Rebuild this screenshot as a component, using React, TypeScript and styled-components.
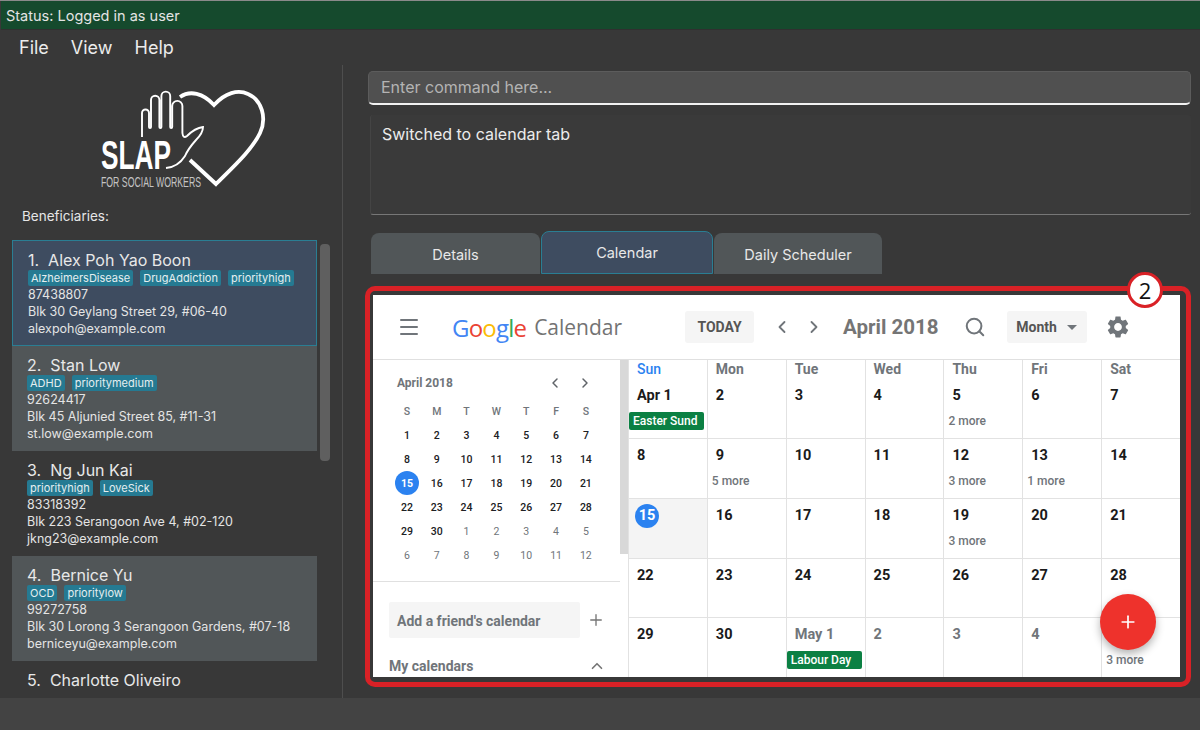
import React from 'react'
import styled, { createGlobalStyle } from 'styled-components'
import { ChevronLeft, ChevronRight, ChevronUp, Menu, Plus, Search } from 'lucide-react'

const GlobalStyle = createGlobalStyle`
  html, body {
    margin: 0;
    padding: 0;
    background: #383838;
  }
  * {
    box-sizing: border-box;
  }
`

const AppWindow = styled.div`
  width: 1200px;
  height: 730px;
  overflow: hidden;
  position: relative;
  display: flex;
  flex-direction: column;
  background: #383838;
  color: #e6e6e6;
  font-family: Inter, 'Liberation Sans', sans-serif;
  border-top: 1px solid #8a8a8a;
`
const StatusBar = styled.div`
  height: 29px;
  flex: none;
  margin-left: 1px;
  padding-left: 5px;
  background: #154a2d;
  font-size: 14.5px;
  line-height: 29px;
  color: #e4e4e4;
  border-bottom: 1px solid #303030;
`
const MenuBar = styled.div`
  height: 35px;
  flex: none;
  display: flex;
  gap: 22px;
  padding-left: 19px;
  font-size: 18px;
  line-height: 36px;
  color: #ececec;
`
const Main = styled.div`
  flex: 1;
  min-height: 0;
  display: flex;
`
const Footer = styled.div`
  height: 32px;
  flex: none;
  background: #434343;
`

const LeftPane = styled.div`
  width: 343px;
  flex: none;
  border-right: 1px solid #4e4e4e;
  display: flex;
  flex-direction: column;
`
const LogoBox = styled.svg`
  display: block;
  margin: 20px 0 0 95px;
  flex: none;
`
const ListLabel = styled.div`
  margin: 11px 0 0 22px;
  font-size: 13.5px;
  line-height: 20px;
  color: #e6e6e6;
`
const ListRow = styled.div`
  display: flex;
  margin: 14px 0 0 12px;
  height: 448px;
`
const CardList = styled.div`
  width: 305px;
  flex: none;
  overflow: hidden;
`
const PersonCard = styled.div<{ $variant: 'selected' | 'light' | 'dark' }>`
  height: ${({ $variant }) => ($variant === 'selected' ? '106px' : '105px')};
  padding: 8px 0 0 15px;
  background: ${({ $variant }) =>
    $variant === 'selected' ? '#3e4c60' : $variant === 'light' ? '#515658' : '#383838'};
  border: ${({ $variant }) => ($variant === 'selected' ? '1px solid #2a7e93' : 'none')};
`
const PersonName = styled.div`
  font-size: 16px;
  line-height: 22px;
  color: #e8e8e8;
  white-space: pre;
`
const TagRow = styled.div`
  display: flex;
  gap: 7px;
  margin-top: -1px;
  height: 16px;
`
const Tag = styled.span`
  padding: 0 3px;
  background: #257a92;
  border-radius: 2px;
  font-size: 11px;
  line-height: 16px;
  color: #e4eef0;
`
const PersonLine = styled.div`
  font-size: 12.5px;
  line-height: 17px;
  color: #e4e4e4;
  white-space: nowrap;
`
const ScrollThumb = styled.div`
  width: 10px;
  height: 217px;
  margin: 4px 0 0 3px;
  border-radius: 4px;
  background: #5f5f5f;
`

const RightPane = styled.div`
  flex: 1;
  min-width: 0;
  display: flex;
  flex-direction: column;
  padding: 6px 9px 0 22px;
`
const CommandBox = styled.div`
  height: 34px;
  margin-left: 3px;
  padding-left: 12px;
  background: #505050;
  border: 1px solid #5c5c5c;
  border-bottom: 2px solid #f2f2f2;
  border-radius: 5px;
  font-size: 16px;
  line-height: 31px;
  color: #b4b4b4;
`
const ResultBox = styled.div`
  height: 100px;
  margin: 10px 0 0 5px;
  padding: 6px 11px;
  background: #3a3a3a;
  border-bottom: 1px solid #777;
  border-left: 1px solid #444;
  border-radius: 3px;
  font-size: 16px;
  line-height: 26px;
  color: #ececec;
`
const TabRow = styled.div`
  display: flex;
  gap: 1px;
  height: 41px;
  margin: 18px 0 0 6px;
  align-items: flex-end;
`
const TabItem = styled.div<{ $active?: boolean; $width: number }>`
  width: ${({ $width }) => $width}px;
  height: ${({ $active }) => ($active ? '43px' : '41px')};
  border-radius: 8px 8px 0 0;
  text-align: center;
  font-size: 14.5px;
  line-height: ${({ $active }) => ($active ? '42px' : '43px')};
  color: #e8e8e8;
  background: ${({ $active }) => ($active ? '#3e4c60' : '#515658')};
  border: ${({ $active }) => ($active ? '1px solid #2a7e93' : 'none')};
`

const CalendarFrame = styled.div`
  position: relative;
  width: 826px;
  height: 401px;
  margin-top: 12px;
  padding: 4px 6px 5px 3px;
  border: 5px solid #d92126;
  border-radius: 10px;
  background: #383838;
`
const FrameBadge = styled.div`
  position: absolute;
  top: -19px;
  right: 23px;
  width: 36px;
  height: 36px;
  border: 3px solid #d92126;
  border-radius: 50%;
  background: #fff;
  color: #111;
  text-align: center;
  font-family: 'Open Sans', sans-serif;
  font-size: 22px;
  line-height: 30px;
`
const CalendarShot = styled.div`
  position: relative;
  width: 100%;
  height: 100%;
  overflow: hidden;
  background: #fff;
  display: flex;
  flex-direction: column;
  font-family: Roboto, 'Liberation Sans', sans-serif;
  color: #70757a;
`
const CalHeader = styled.div`
  height: 65px;
  flex: none;
  display: flex;
  align-items: center;
  border-bottom: 1px solid #e0e0e0;
`
const HeaderIcon = styled.span<{ $left: number }>`
  display: flex;
  margin-left: ${({ $left }) => $left}px;
  color: #70757a;
`
const GoogleWord = styled.span`
  margin-left: 31px;
  font-family: 'Open Sans', sans-serif;
  font-size: 24px;
  letter-spacing: -0.8px;
`
const GoogleLetter = styled.span<{ $color: string }>`
  color: ${({ $color }) => $color};
`
const CalendarWord = styled.span`
  margin-left: 8px;
  font-family: 'Open Sans', sans-serif;
  font-size: 21px;
  color: #737373;
`
const GreyButton = styled.div<{ $width: number; $left: number }>`
  width: ${({ $width }) => $width}px;
  height: 32px;
  margin-left: ${({ $left }) => $left}px;
  display: flex;
  align-items: center;
  justify-content: center;
  gap: 10px;
  background: #f5f5f5;
  border-radius: 3px;
  font-size: 14px;
  font-weight: 700;
  color: #555;
`
const Caret = styled.span`
  width: 0;
  height: 0;
  border-left: 5px solid transparent;
  border-right: 5px solid transparent;
  border-top: 5px solid #70757a;
`
const MonthTitle = styled.span`
  margin-left: 19px;
  font-size: 20.5px;
  font-weight: 700;
  color: #757575;
  white-space: nowrap;
`
const CalBody = styled.div`
  flex: 1;
  min-height: 0;
  display: flex;
`
const SidePanel = styled.div`
  width: 247px;
  flex: none;
  overflow: hidden;
`
const SideScroll = styled.div`
  width: 8px;
  flex: none;
  background: linear-gradient(#d8d8d8 0 194px, #fff 194px);
`
const MiniSection = styled.div`
  height: 222px;
  padding: 14px 0 0 19px;
  border-bottom: 1px solid #e0e0e0;
`
const MiniTitleRow = styled.div`
  display: flex;
  align-items: center;
  height: 18px;
  padding-left: 5px;
  font-size: 12px;
  font-weight: 700;
  color: #70757a;
`
const MiniTitle = styled.span`
  width: 150px;
`
const MiniArrows = styled.span`
  display: flex;
  gap: 14px;
  color: #5f6368;
`
const MiniGrid = styled.div`
  display: grid;
  grid-template-columns: repeat(7, 29.83px);
  grid-auto-rows: 24px;
  margin-top: 7px;
`
const MiniCell = styled.span<{ $tone: 'head' | 'day' | 'out' }>`
  display: flex;
  align-items: center;
  justify-content: center;
  font-size: 10.5px;
  font-weight: ${({ $tone }) => ($tone === 'out' ? 400 : 500)};
  color: ${({ $tone }) => ($tone === 'day' ? '#202124' : '#70757a')};
`
const MiniToday = styled.span`
  width: 24px;
  height: 24px;
  border-radius: 50%;
  background: #2b82f0;
  color: #fff;
  font-weight: 700;
  display: flex;
  align-items: center;
  justify-content: center;
`
const FriendRow = styled.div`
  display: flex;
  align-items: center;
  margin: 20px 0 0 16px;
  height: 36px;
`
const FriendInput = styled.div`
  width: 191px;
  height: 36px;
  padding-left: 8px;
  background: #f5f5f5;
  border-radius: 2px;
  font-size: 14px;
  font-weight: 700;
  line-height: 38px;
  color: #70757a;
`
const MineRow = styled.div`
  display: flex;
  align-items: center;
  margin: 19px 0 0 16px;
  height: 18px;
  font-size: 14px;
  font-weight: 700;
  color: #70757a;
`
const MineLabel = styled.span`
  width: 199px;
`
const SideIcon = styled.span<{ $left?: number }>`
  display: flex;
  margin-left: ${({ $left }) => $left ?? 0}px;
  color: #757575;
`
const MonthGrid = styled.div`
  flex: 1;
  display: grid;
  grid-template-columns: repeat(7, 1fr);
  grid-template-rows: 79px repeat(4, 59.75px);
`
const DayCell = styled.div<{ $today?: boolean }>`
  min-width: 0;
  padding-left: 8px;
  border-left: 1px solid #e2e2e2;
  border-bottom: 1px solid #e2e2e2;
  background: ${({ $today }) => ($today ? '#f4f4f4' : '#fff')};
`
const DayHead = styled.div<{ $blue?: boolean }>`
  height: 18px;
  font-size: 14px;
  font-weight: ${({ $blue }) => ($blue ? 500 : 700)};
  line-height: 18px;
  color: ${({ $blue }) => ($blue ? '#2b82f0' : '#70757a')};
`
const DayNumber = styled.div<{ $out?: boolean; $first?: boolean }>`
  height: 20px;
  margin-top: ${({ $first }) => ($first ? '8px' : '7px')};
  font-size: 14.5px;
  font-weight: 700;
  line-height: 20px;
  color: ${({ $out }) => ($out ? '#70757a' : '#1a1a1a')};
`
const TodayBubble = styled.div`
  width: 24px;
  height: 24px;
  margin: 5px 0 -2px -2px;
  border-radius: 50%;
  background: #2b82f0;
  color: #fff;
  font-size: 14.5px;
  font-weight: 700;
  line-height: 24px;
  text-align: center;
`
const EventChip = styled.div`
  height: 18px;
  margin: 6px 3px 0 -8px;
  padding-left: 4px;
  overflow: hidden;
  white-space: nowrap;
  background: #0b8043;
  border-radius: 2px;
  font-size: 12px;
  font-weight: 500;
  line-height: 18px;
  color: #fff;
`
const MoreLabel = styled.div`
  height: 16px;
  margin: 7px 0 0 -4px;
  font-size: 12px;
  font-weight: 500;
  line-height: 16px;
  color: #70757a;
`
const AddButton = styled.div`
  position: absolute;
  left: 727px;
  top: 299px;
  width: 56px;
  height: 56px;
  display: flex;
  align-items: center;
  justify-content: center;
  border-radius: 50%;
  background: #ee322c;
  color: #fff;
  box-shadow: 0 4px 8px rgba(0, 0, 0, 0.3);
`

const people = [
  { name: '1.  Alex Poh Yao Boon', tags: ['AlzheimersDisease', 'DrugAddiction', 'priorityhigh'], phone: '87438807', address: 'Blk 30 Geylang Street 29, #06-40', email: 'alexpoh@example.com' },
  { name: '2.  Stan Low', tags: ['ADHD', 'prioritymedium'], phone: '92624417', address: 'Blk 45 Aljunied Street 85, #11-31', email: 'st.low@example.com' },
  { name: '3.  Ng Jun Kai', tags: ['priorityhigh', 'LoveSick'], phone: '83318392', address: 'Blk 223 Serangoon Ave 4, #02-120', email: 'jkng23@example.com' },
  { name: '4.  Bernice Yu', tags: ['OCD', 'prioritylow'], phone: '99272758', address: 'Blk 30 Lorong 3 Serangoon Gardens, #07-18', email: 'berniceyu@example.com' },
  { name: '5.  Charlotte Oliveiro', tags: [], phone: '', address: '', email: '' },
]

const miniWeeks = [
  [1, 2, 3, 4, 5, 6, 7],
  [8, 9, 10, 11, 12, 13, 14],
  [15, 16, 17, 18, 19, 20, 21],
  [22, 23, 24, 25, 26, 27, 28],
  [29, 30, 1, 2, 3, 4, 5],
  [6, 7, 8, 9, 10, 11, 12],
]

interface DayInfo {
  label: string
  head?: string
  out?: boolean
  today?: boolean
  chip?: string
  more?: string
}

const monthDays: DayInfo[] = [
  { label: 'Apr 1', head: 'Sun', chip: 'Easter Sund' },
  { label: '2', head: 'Mon' },
  { label: '3', head: 'Tue' },
  { label: '4', head: 'Wed' },
  { label: '5', head: 'Thu', more: '2 more' },
  { label: '6', head: 'Fri' },
  { label: '7', head: 'Sat' },
  { label: '8' },
  { label: '9', more: '5 more' },
  { label: '10' },
  { label: '11' },
  { label: '12', more: '3 more' },
  { label: '13', more: '1 more' },
  { label: '14' },
  { label: '15', today: true },
  { label: '16' },
  { label: '17' },
  { label: '18' },
  { label: '19', more: '3 more' },
  { label: '20' },
  { label: '21' },
  { label: '22' },
  { label: '23' },
  { label: '24' },
  { label: '25' },
  { label: '26' },
  { label: '27' },
  { label: '28' },
  { label: '29' },
  { label: '30' },
  { label: 'May 1', out: true, chip: 'Labour Day' },
  { label: '2', out: true },
  { label: '3', out: true },
  { label: '4', out: true },
  { label: '5', out: true, more: '3 more' },
]

const GEAR_PATH =
  'M19.14 12.94c.04-.3.06-.61.06-.94 0-.32-.02-.64-.07-.94l2.03-1.58c.18-.14.23-.41.12-.61l-1.92-3.32c-.12-.22-.37-.29-.59-.22l-2.39.96c-.5-.38-1.03-.7-1.62-.94l-.36-2.54c-.04-.24-.24-.41-.48-.41h-3.84c-.24 0-.43.17-.47.41l-.36 2.54c-.59.24-1.13.57-1.62.94l-2.39-.96c-.22-.08-.47 0-.59.22L2.74 8.87c-.12.21-.08.47.12.61l2.03 1.58c-.05.3-.09.63-.09.94s.02.64.07.94l-2.03 1.58c-.18.14-.23.41-.12.61l1.92 3.32c.12.22.37.29.59.22l2.39-.96c.5.38 1.03.7 1.62.94l.36 2.54c.05.24.24.41.48.41h3.84c.24 0 .44-.17.47-.41l.36-2.54c.59-.24 1.13-.56 1.62-.94l2.39.96c.22.08.47 0 .59-.22l1.92-3.32c.12-.22.07-.47-.12-.61l-2.01-1.58zM12 15.6c-1.98 0-3.6-1.62-3.6-3.6s1.62-3.6 3.6-3.6 3.6 1.62 3.6 3.6-1.62 3.6-3.6 3.6z'

const SlapLogo = () => (
  <LogoBox width="175" height="110" viewBox="95 85 175 110">
    <path
      d="M180 97 C190 90 203 93 214 105 C225 93 238 89 248 94 C262 100 267 118 260 133 C252 150 232 168 216 184 L190 160"
      fill="none"
      stroke="#fff"
      strokeWidth="3.8"
    />
    <path
      d="M142 137 V113 A3.5 3.5 0 0 1 149 113 V127 A1 1 0 0 0 151 127 V100 A4.2 4.2 0 0 1 159.4 100 V127 A1 1 0 0 0 161.4 127 V96 A4.4 4.4 0 0 1 170.2 96 V127 A1 1 0 0 0 172.2 127 V106 A5 5 0 0 1 182.4 106 V133 Q183 139 187 136 Q195 128 203 127 Q203 133 196 140 Q188 149 185 156 Q178 167 166 168"
      fill="none"
      stroke="#fff"
      strokeWidth="1.9"
    />
    <text
      x="101"
      y="169"
      fill="#fff"
      fontFamily="'Liberation Sans Narrow', 'Liberation Sans', sans-serif"
      fontWeight="700"
      fontSize="41"
      textLength="70"
      lengthAdjust="spacingAndGlyphs"
    >
      SLAP
    </text>
    <text
      x="101"
      y="187"
      fill="#c4c4c4"
      fontFamily="'Liberation Sans Narrow', 'Liberation Sans', sans-serif"
      fontSize="15"
      textLength="100"
      lengthAdjust="spacingAndGlyphs"
    >
      FOR SOCIAL WORKERS
    </text>
  </LogoBox>
)

const App: React.FC = () => (
  <AppWindow>
    <GlobalStyle />
    <StatusBar>Status: Logged in as user</StatusBar>
    <MenuBar>
      <span>File</span>
      <span>View</span>
      <span>Help</span>
    </MenuBar>
    <Main>
      <LeftPane>
        <SlapLogo />
        <ListLabel>Beneficiaries:</ListLabel>
        <ListRow>
          <CardList>
            {people.map((p, i) => (
              <PersonCard key={p.name} $variant={i === 0 ? 'selected' : i % 2 === 1 ? 'light' : 'dark'}>
                <PersonName>{p.name}</PersonName>
                <TagRow>
                  {p.tags.map((t) => (
                    <Tag key={t}>{t}</Tag>
                  ))}
                </TagRow>
                <PersonLine>{p.phone}</PersonLine>
                <PersonLine>{p.address}</PersonLine>
                <PersonLine>{p.email}</PersonLine>
              </PersonCard>
            ))}
          </CardList>
          <ScrollThumb />
        </ListRow>
      </LeftPane>
      <RightPane>
        <CommandBox>Enter command here...</CommandBox>
        <ResultBox>Switched to calendar tab</ResultBox>
        <TabRow>
          <TabItem $width={169}>Details</TabItem>
          <TabItem $width={172} $active>Calendar</TabItem>
          <TabItem $width={168}>Daily Scheduler</TabItem>
        </TabRow>
        <CalendarFrame>
          <CalendarShot>
            <CalHeader>
              <HeaderIcon $left={24}>
                <Menu size={24} strokeWidth={2} />
              </HeaderIcon>
              <GoogleWord>
                <GoogleLetter $color="#4285f4">G</GoogleLetter>
                <GoogleLetter $color="#ea4335">o</GoogleLetter>
                <GoogleLetter $color="#fbbc05">o</GoogleLetter>
                <GoogleLetter $color="#4285f4">g</GoogleLetter>
                <GoogleLetter $color="#34a853">l</GoogleLetter>
                <GoogleLetter $color="#ea4335">e</GoogleLetter>
              </GoogleWord>
              <CalendarWord>Calendar</CalendarWord>
              <GreyButton $width={69} $left={63}>TODAY</GreyButton>
              <HeaderIcon $left={18}>
                <ChevronLeft size={20} strokeWidth={2.2} />
              </HeaderIcon>
              <HeaderIcon $left={12}>
                <ChevronRight size={20} strokeWidth={2.2} />
              </HeaderIcon>
              <MonthTitle>April 2018</MonthTitle>
              <HeaderIcon $left={25}>
                <Search size={22} strokeWidth={2.2} />
              </HeaderIcon>
              <GreyButton $width={80} $left={21}>
                Month
                <Caret />
              </GreyButton>
              <HeaderIcon $left={18}>
                <svg width="26" height="26" viewBox="0 0 24 24" fill="#70757a">
                  <path d={GEAR_PATH} />
                </svg>
              </HeaderIcon>
            </CalHeader>
            <CalBody>
              <SidePanel>
                <MiniSection>
                  <MiniTitleRow>
                    <MiniTitle>April 2018</MiniTitle>
                    <MiniArrows>
                      <ChevronLeft size={16} strokeWidth={2.2} />
                      <ChevronRight size={16} strokeWidth={2.2} />
                    </MiniArrows>
                  </MiniTitleRow>
                  <MiniGrid>
                    {['S', 'M', 'T', 'W', 'T', 'F', 'S'].map((d, i) => (
                      <MiniCell key={i} $tone="head">{d}</MiniCell>
                    ))}
                    {miniWeeks.map((week, w) =>
                      week.map((d, i) => (
                        <MiniCell key={`${w}-${i}`} $tone={w > 4 || (w === 4 && i > 1) ? 'out' : 'day'}>
                          {w === 2 && i === 0 ? <MiniToday>{d}</MiniToday> : d}
                        </MiniCell>
                      )),
                    )}
                  </MiniGrid>
                </MiniSection>
                <FriendRow>
                  <FriendInput>Add a friend's calendar</FriendInput>
                  <SideIcon $left={7}>
                    <Plus size={18} strokeWidth={1.8} />
                  </SideIcon>
                </FriendRow>
                <MineRow>
                  <MineLabel>My calendars</MineLabel>
                  <SideIcon>
                    <ChevronUp size={18} strokeWidth={2.2} />
                  </SideIcon>
                </MineRow>
              </SidePanel>
              <SideScroll />
              <MonthGrid>
                {monthDays.map((d, i) => (
                  <DayCell key={i} $today={d.today}>
                    {d.head && <DayHead $blue={d.head === 'Sun'}>{d.head}</DayHead>}
                    {d.today ? (
                      <TodayBubble>{d.label}</TodayBubble>
                    ) : (
                      <DayNumber $out={d.out} $first={!!d.head}>{d.label}</DayNumber>
                    )}
                    {d.chip && <EventChip>{d.chip}</EventChip>}
                    {d.more && <MoreLabel>{d.more}</MoreLabel>}
                  </DayCell>
                ))}
              </MonthGrid>
            </CalBody>
            <AddButton>
              <Plus size={20} strokeWidth={2} />
            </AddButton>
          </CalendarShot>
          <FrameBadge>2</FrameBadge>
        </CalendarFrame>
      </RightPane>
    </Main>
    <Footer />
  </AppWindow>
)

export default App
